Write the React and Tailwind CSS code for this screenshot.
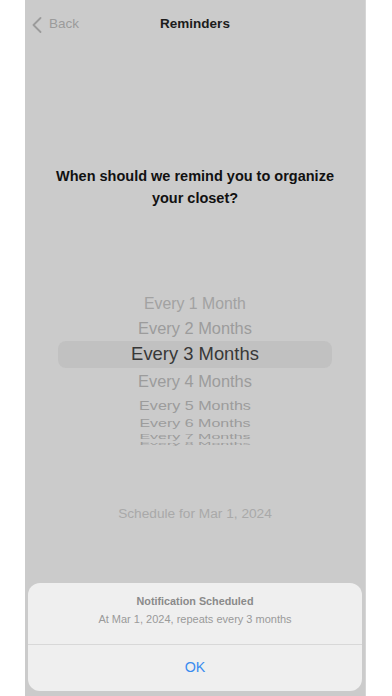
import React from 'react';

const rows = [
  { label: 'Every 1 Month', h: 'h-[24px]', size: 'text-[15.8px]', color: 'text-[#a2a2a2]', scale: '' },
  { label: 'Every 2 Months', h: 'h-[25px]', size: 'text-[16.4px]', color: 'text-[#9c9c9c]', scale: '' },
];

const lower = [
  { label: 'Every 4 Months', h: 'h-[26px]', size: 'text-[16.4px]', scale: 'scale-y-100' },
  { label: 'Every 5 Months', h: 'h-[22px]', size: 'text-[16.1px]', scale: 'scale-y-[0.85]' },
  { label: 'Every 6 Months', h: 'h-[16px]', size: 'text-[16px]', scale: 'scale-y-[0.68]' },
  { label: 'Every 7 Months', h: 'h-[10px]', size: 'text-[16px]', scale: 'scale-y-[0.45]' },
  { label: 'Every 8 Months', h: 'h-[4px]', size: 'text-[16px]', scale: 'scale-y-[0.2]' },
];

const App = () => {
  return (
    <div className="w-[392px] h-[696px] bg-white overflow-hidden" style={{ fontFamily: '"Liberation Sans", Arial, sans-serif' }}>
      <div className="ml-[25px] w-[341px] h-[696px] bg-[#cbcbcb] flex flex-col border-r border-[#d6d6d6]">
        {/* nav bar */}
        <div className="h-[46px] pt-[3px] grid grid-cols-[1fr_auto_1fr] items-center px-[7px]">
          <div className="flex items-center gap-[7px] text-[#9b9b9b]">
            <svg width="10" height="16" viewBox="0 0 10 16" fill="none">
              <path d="M8.5 1L1.5 8L8.5 15" stroke="#9b9b9b" strokeWidth="1.8" strokeLinecap="round" strokeLinejoin="round" />
            </svg>
            <span className="text-[13.5px]">Back</span>
          </div>
          <div className="text-[13.5px] font-bold text-[#1c1c1c]">Reminders</div>
          <div />
        </div>

        {/* question */}
        <p className="mt-[119px] px-[24px] text-center text-[14.5px] leading-[22px] font-bold text-[#111111]">
          When should we remind you to organize your closet?
        </p>

        {/* wheel picker */}
        <div className="mt-[83px] flex flex-col">
          {rows.map((r) => (
            <div key={r.label} className={`${r.h} flex items-center justify-center`}>
              <span className={`${r.size} ${r.color} leading-none`}>{r.label}</span>
            </div>
          ))}
          <div className="h-[27px] mx-[33px] rounded-[8px] bg-[#c1c1c1] flex items-center justify-center">
            <span className="text-[18.4px] leading-none text-[#383838]">Every 3 Months</span>
          </div>
          {lower.map((r) => (
            <div key={r.label} className={`${r.h} flex items-center justify-center overflow-hidden`}>
              <span className={`${r.size} ${r.scale} inline-block leading-none text-[#9c9c9c]`}>{r.label}</span>
            </div>
          ))}
        </div>

        <p className="mt-[58px] text-center text-[13.7px] leading-[20px] text-[#a9a9a9]">Schedule for Mar 1, 2024</p>

        {/* alert sheet */}
        <div className="mt-auto mx-[3px] mb-[5px] rounded-[12px] bg-[#efefef] flex flex-col">
          <div className="h-[61px] flex flex-col items-center pt-[11px]">
            <span className="text-[10.8px] leading-[14px] font-bold text-[#8a8a8a]">Notification Scheduled</span>
            <span className="mt-[4px] text-[11px] leading-[14px] text-[#9a9a9a]">At Mar 1, 2024, repeats every 3 months</span>
          </div>
          <div className="h-px bg-[#d8d8d8]" />
          <div className="h-[46px] flex items-center justify-center">
            <span className="text-[14.3px] text-[#3a8cef]">OK</span>
          </div>
        </div>
      </div>
    </div>
  );
};

export default App;
